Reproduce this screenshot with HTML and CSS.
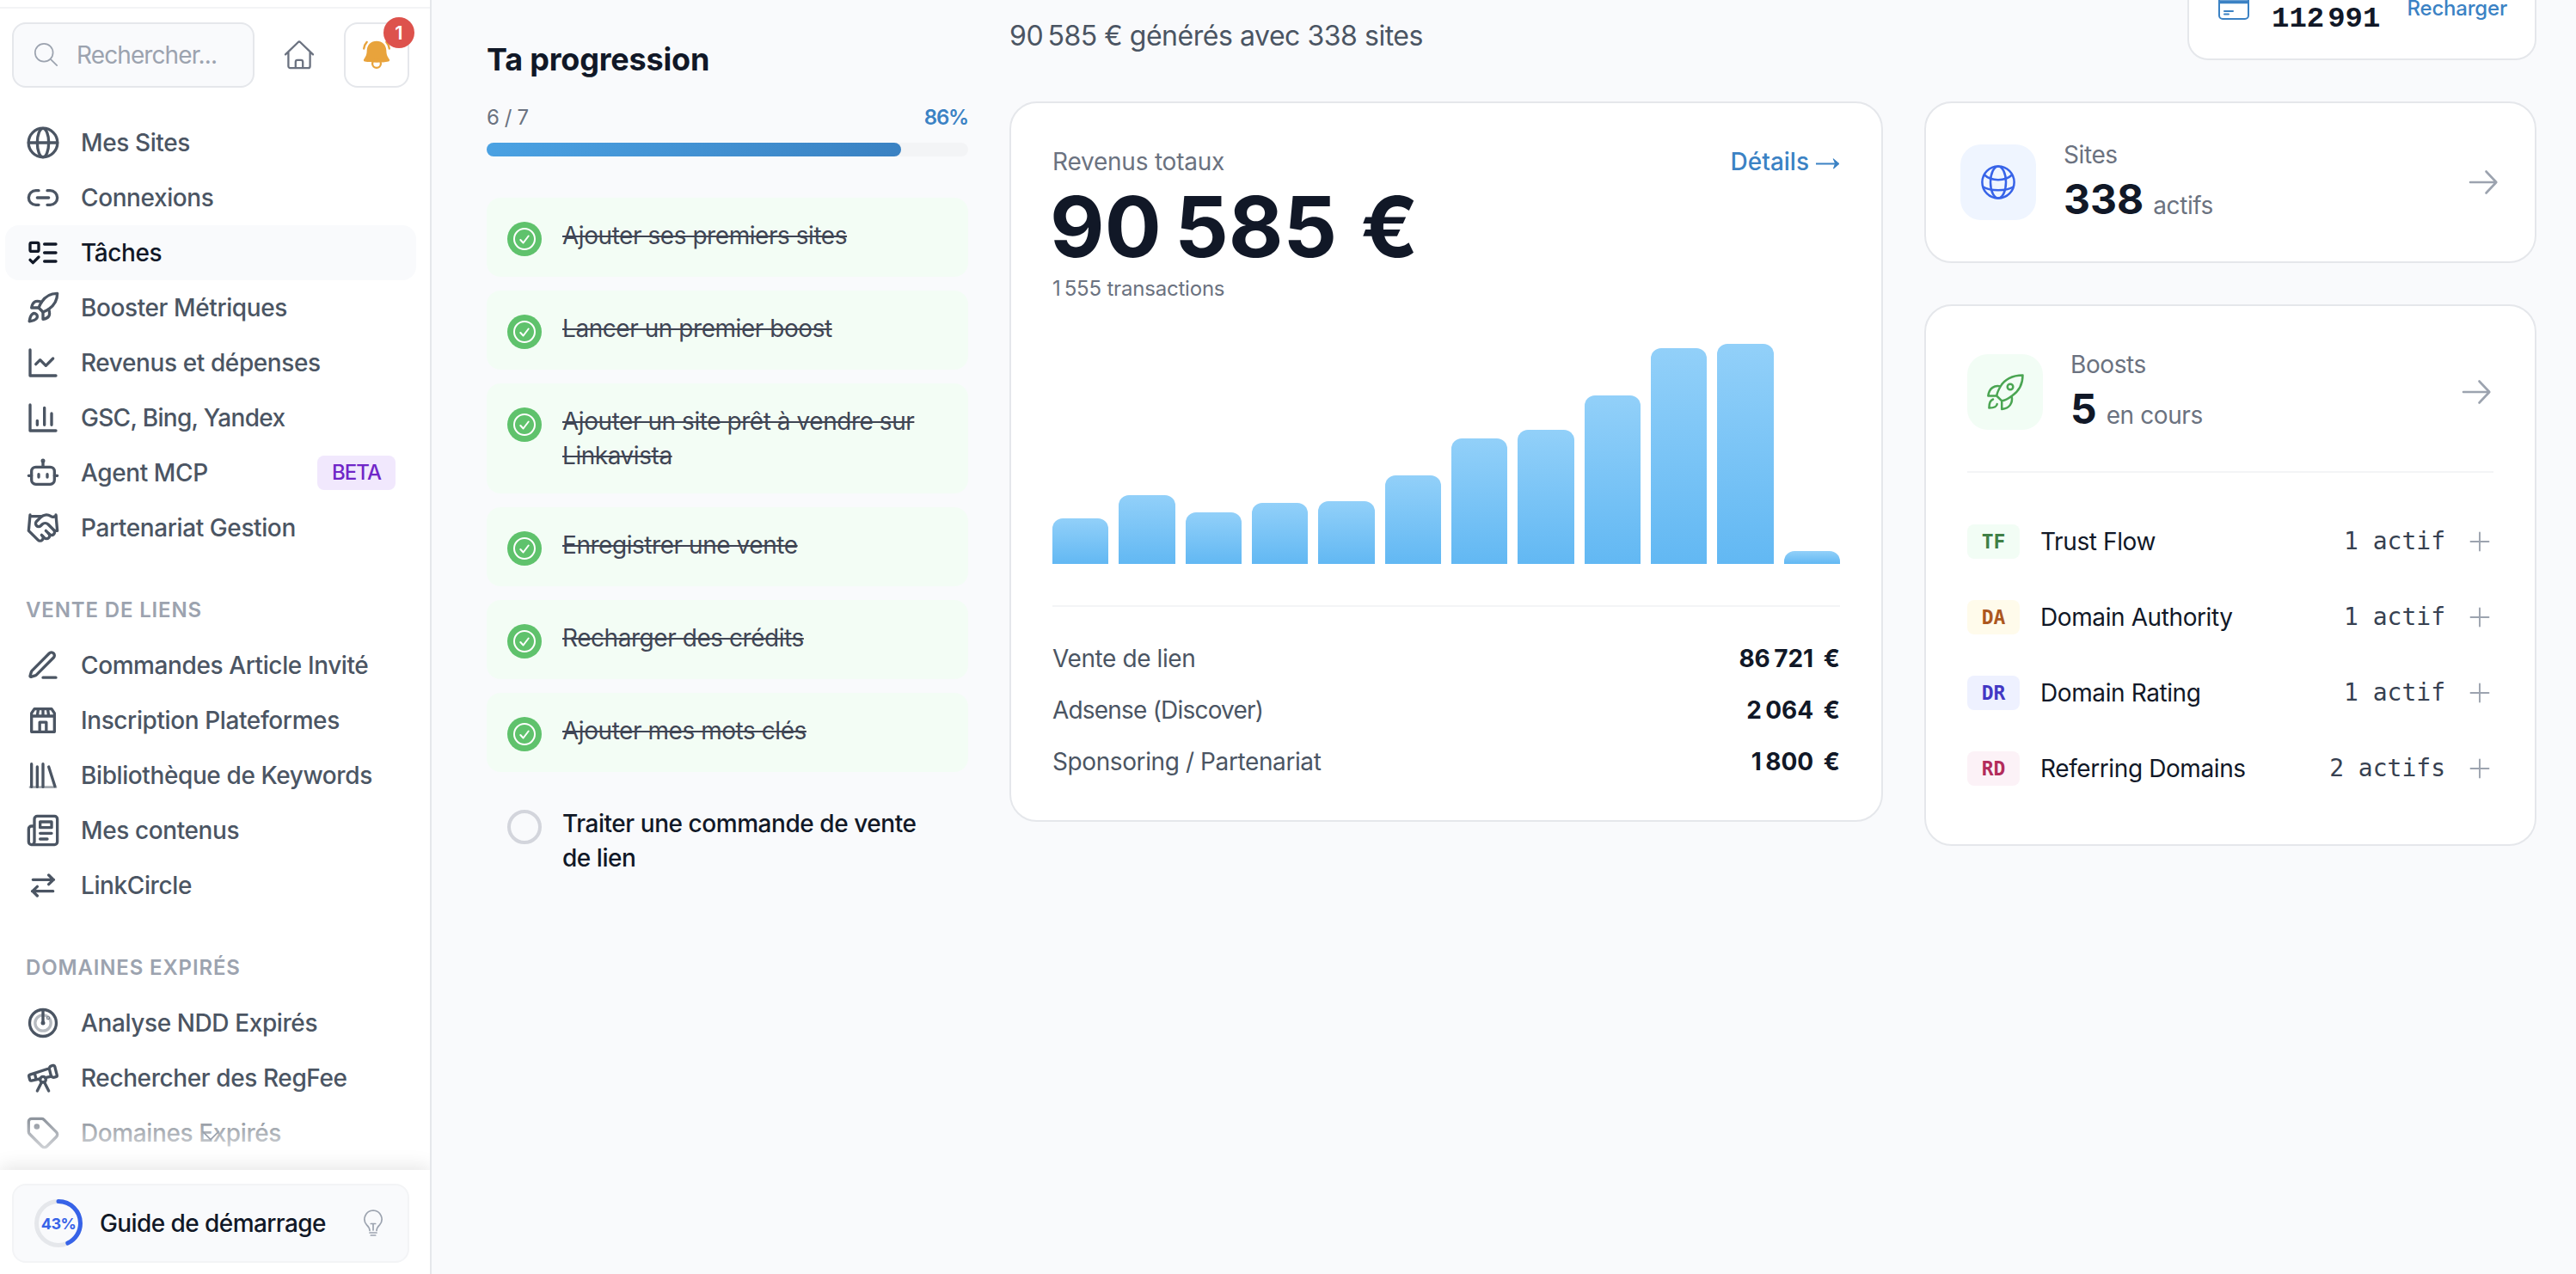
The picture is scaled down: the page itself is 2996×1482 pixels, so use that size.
FILE: index.html
```
<!DOCTYPE html>
<html lang="fr">
<head>
<meta charset="utf-8">
<title>Tâches</title>
<link rel="stylesheet" href="styles.css">
</head>
<body>
<div class="app">
  <aside class="sidebar">
    <header class="side-head">
      <div class="search">
        <svg class="search-icon" viewBox="0 0 32 32"><circle cx="13.2" cy="13.2" r="10.4"/><path d="M20.8 20.8l7.4 7.4"/></svg>
        <span>Rechercher...</span>
      </div>
      <a class="home"><svg viewBox="0 0 40 40"><path d="M4 19.4 18.6 5.2a2 2 0 0 1 2.8 0L36 19.4M7.4 17v16a2.2 2.2 0 0 0 2.2 2.2h20.8a2.2 2.2 0 0 0 2.2-2.2V17M15.8 35v-7a2.2 2.2 0 0 1 2.2-2.2h4a2.2 2.2 0 0 1 2.2 2.2v7"/></svg></a>
      <a class="bell">
        <svg viewBox="0 0 40 40"><path class="fill" d="M20 3.8c-6.6 0-11 4.4-11.300 10.800-.2 4.400-.5 6.200-3.500 10.400-.7 1.200-.2 2.200 1 2.500 3.600.8 8.500 1.200 13.800 1.200s10.200-.4 13.800-1.200c1.200-.3 1.700-1.300 1-2.500-3-4.200-3.300-6-3.500-10.400C31 8.200 26.600 3.800 20 3.800Z"/><circle cx="20" cy="30" r="4.900"/><path d="M5.200 12.500c.4-3 1.600-5.600 3.500-7.600M34.800 12.500c-.4-3-1.600-5.600-3.500-7.600"/></svg>
        <span class="count">1</span>
      </a>
    </header>
    <nav class="nav">
      <a class="item"><svg viewBox="0 0 24 24"><circle cx="12" cy="12" r="10.100"/><ellipse cx="12" cy="12" rx="4" ry="10"/><path d="M2 12h20"/></svg><span>Mes Sites</span></a>
      <a class="item"><svg viewBox="0 0 24 24"><path d="M9 17H7A5 5 0 0 1 7 7h2M15 7h2a5 5 0 1 1 0 10h-2M8 12h8"/></svg><span>Connexions</span></a>
      <a class="item active"><svg viewBox="0 0 24 24"><rect x="3" y="5" width="6" height="6" rx="1"/><path d="m3 17 2 2 4-4M13 6h8M13 12h8M13 18h8"/></svg><span>Tâches</span></a>
      <a class="item"><svg viewBox="0 0 24 24"><path d="M4.500 16.500c-1.500 1.260-2 5-2 5s3.740-.5 5-2c.71-.84.7-2.130-.09-2.910a2.180 2.180 0 0 0-2.910-.09zM12 15l-3-3a22 22 0 0 1 2-3.950A12.880 12.880 0 0 1 22 2c0 2.720-.78 7.500-6 11a22.350 22.350 0 0 1-4 2z"/><path d="M9 12H4s.55-3.030 2-4c1.620-1.080 5 0 5 0M12 15v5s3.030-.55 4-2c1.080-1.620 0-5 0-5"/></svg><span>Booster Métriques</span></a>
      <a class="item"><svg viewBox="0 0 24 24"><path d="M3 3v18h18M19 9l-5 5-4-4-3 3"/></svg><span>Revenus et dépenses</span></a>
      <a class="item"><svg viewBox="0 0 24 24"><path d="M3 3v18h18M18 17V9M13 17V5M8 17v-3"/></svg><span class="snug">GSC, Bing, Yandex</span></a>
      <a class="item"><svg viewBox="0 0 24 24"><rect x="4" y="8" width="16" height="12" rx="3"/><path d="M12 8V4M2 14h2M20 14h2M15 13v2M9 13v2"/><circle cx="12" cy="3.600" r=".5"/></svg><span>Agent MCP</span><b class="beta">BETA</b></a>
      <a class="item"><svg viewBox="0 0 24 24"><path d="m11 17 2 2a1 1 0 1 0 3-3"/><path d="m14 14 2.500 2.500a1 1 0 1 0 3-3l-3.880-3.880a3 3 0 0 0-4.240 0l-.88.88a1 1 0 1 1-3-3l2.810-2.810a5.790 5.790 0 0 1 7.060-.87l.47.28a2 2 0 0 0 1.420.25L21 4"/><path d="m21 3 1 11h-2M3 3 2 14l6.500 6.500a1 1 0 1 0 3-3M3 4h8"/></svg><span>Partenariat Gestion</span></a>
      <h3 class="group">VENTE DE LIENS</h3>
      <a class="item"><svg viewBox="0 0 24 24"><path d="M12 20.500h9M16.376 3.622a1 1 0 0 1 3.002 3.002L7.368 18.635a2 2 0 0 1-.855.506l-2.872.838a.5.5 0 0 1-.62-.62l.838-2.872a2 2 0 0 1 .506-.854z"/></svg><span>Commandes Article Invité</span></a>
      <a class="item"><svg viewBox="0 0 24 24"><path d="M6 4h12l2 3v2H4V7zM4 9v11h16V9M8.700 4 8 9M12 4v5M15.300 4l.7 5M9.700 20v-6.700h4.600V20"/></svg><span>Inscription Plateformes</span></a>
      <a class="item"><svg viewBox="0 0 24 24"><path class="thin" d="M3 20.200h18"/><path d="M4 4v16M8 6v14M12 4v16M16 6l4.300 13.500"/></svg><span>Bibliothèque de Keywords</span></a>
      <a class="item"><svg viewBox="0 0 24 24"><path d="M4 22h16a2 2 0 0 0 2-2V4a2 2 0 0 0-2-2H8a2 2 0 0 0-2 2v16a2 2 0 0 1-2 2Zm0 0a2 2 0 0 1-2-2v-9c0-1.100.9-2 2-2h2M18 14h-8M15 18h-5M10 6h8v4h-8z"/></svg><span>Mes contenus</span></a>
      <a class="item"><svg viewBox="0 0 24 24"><path d="M5 8h14.500M16 4.800 19.300 8 16 11.200M19 16H4.500M8 12.800 4.700 16 8 19.200"/></svg><span>LinkCircle</span></a>
      <h3 class="group">DOMAINES EXPIRÉS</h3>
      <a class="item"><svg viewBox="0 0 24 24"><circle cx="12" cy="12" r="9.300"/><circle class="soft" cx="12" cy="12" r="5.500"/><path d="M12 3v9"/><circle cx="12" cy="12" r=".5"/><circle cx="15.500" cy="8.500" r=".2"/></svg><span>Analyse NDD Expirés</span></a>
      <a class="item"><svg viewBox="0 0 24 24"><path d="m10.065 12.493-6.180 1.318a.934.934 0 0 1-1.108-.702l-.537-2.150a1.070 1.070 0 0 1 .691-1.265l13.504-4.440M13.560 11.747l4.332-.924M16 21l-3.105-6.210M16.485 5.940a2 2 0 0 1 1.455-2.425l1.090-.272a1 1 0 0 1 1.212.727l1.515 6.060a1 1 0 0 1-.727 1.213l-1.090.272a2 2 0 0 1-2.425-1.455zM6.158 8.633l1.114 4.456M8 21l3.105-6.210"/><circle cx="12" cy="13" r="2"/></svg><span>Rechercher des RegFee</span></a>
      <a class="item"><svg viewBox="0 0 24 24"><path d="M12.586 2.586A2 2 0 0 0 11.172 2H4a2 2 0 0 0-2 2v7.172a2 2 0 0 0 .586 1.414l8.704 8.704a2.426 2.426 0 0 0 3.420 0l6.580-6.580a2.426 2.426 0 0 0 0-3.420z"/><circle cx="7.700" cy="7.500" r="1"/></svg><span>Domaines Expirés</span></a>
      <div class="fade"><svg viewBox="0 0 24 24"><path d="M2 7l10 10L22 7"/></svg></div>
    </nav>
    <footer class="side-foot">
      <a class="guide">
        <span class="ring">
          <svg viewBox="0 0 56 56"><circle class="track" cx="28" cy="28" r="25.500"/><circle class="value" cx="28" cy="28" r="25.500" pathLength="100" stroke-dasharray="43 100"/></svg>
          <b>43%</b>
        </span>
        <span class="guide-label">Guide de démarrage</span>
        <svg class="bulb" viewBox="0 0 24 32"><path d="M8 24.500c0-3-1.600-4.700-3.500-6.600A10.200 10.200 0 0 1 12 1a10.200 10.200 0 0 1 7.500 16.900c-1.900 1.900-3.500 3.600-3.500 6.600M12 24v-7.500M9.300 16.500h5.400M8 27h8M9.300 30h5.400"/></svg>
      </a>
    </footer>
  </aside>

  <main class="main">
    <section class="progress">
      <h2>Ta progression</h2>
      <div class="progress-meta"><span>6 / 7</span><b>86%</b></div>
      <div class="bar"><div class="bar-fill" style="width:86%"></div></div>
      <ul class="tasks">
        <li class="done"><svg viewBox="0 0 40 40"><circle class="disc" cx="20" cy="20" r="20"/><circle cx="20" cy="20" r="12"/><path d="M15.300 21l3.300 3.500 6.100-8"/></svg><span>Ajouter ses premiers sites</span></li>
        <li class="done"><svg viewBox="0 0 40 40"><circle class="disc" cx="20" cy="20" r="20"/><circle cx="20" cy="20" r="12"/><path d="M15.300 21l3.300 3.500 6.100-8"/></svg><span>Lancer un premier boost</span></li>
        <li class="done"><svg viewBox="0 0 40 40"><circle class="disc" cx="20" cy="20" r="20"/><circle cx="20" cy="20" r="12"/><path d="M15.300 21l3.300 3.500 6.100-8"/></svg><span>Ajouter un site prêt à vendre sur Linkavista</span></li>
        <li class="done"><svg viewBox="0 0 40 40"><circle class="disc" cx="20" cy="20" r="20"/><circle cx="20" cy="20" r="12"/><path d="M15.300 21l3.300 3.500 6.100-8"/></svg><span>Enregistrer une vente</span></li>
        <li class="done"><svg viewBox="0 0 40 40"><circle class="disc" cx="20" cy="20" r="20"/><circle cx="20" cy="20" r="12"/><path d="M15.300 21l3.300 3.500 6.100-8"/></svg><span>Recharger des crédits</span></li>
        <li class="done"><svg viewBox="0 0 40 40"><circle class="disc" cx="20" cy="20" r="20"/><circle cx="20" cy="20" r="12"/><path d="M15.300 21l3.300 3.500 6.100-8"/></svg><span>Ajouter mes mots clés</span></li>
        <li class="todo"><i class="empty"></i><span>Traiter une commande de vente de lien</span></li>
      </ul>
    </section>

    <section class="board">
      <div class="board-head">
        <p>90&#8239;585 € générés avec 338 sites</p>
        <div class="credit">
          <svg viewBox="0 0 36 32"><rect x="1" y="1" width="34" height="30" rx="4"/><path class="band" d="M1 11.300h34"/><path d="M7 22h10M7 25.600h5"/></svg>
          <strong>112<span class="sep">&#8239;</span>991</strong>
          <a>Recharger</a>
        </div>
      </div>
      <div class="columns">
        <article class="card revenue">
          <div class="row label"><span>Revenus totaux</span><a>Détails<svg viewBox="0 0 28 14"><path d="M.5 7.500h22"/><path class="head" d="M20.500 2l6.500 5.500-6.500 5.500 2-5.500z"/></svg></a></div>
          <div class="total">90&#8239;585 €</div>
          <div class="count-line">1&#8239;555 transactions</div>
          <div class="chart">
            <i style="height:53px"></i><i style="height:80px"></i><i style="height:60px"></i><i style="height:71px"></i><i style="height:73px"></i><i style="height:103px"></i><i style="height:146px"></i><i style="height:156px"></i><i style="height:196px"></i><i style="height:251px"></i><i style="height:256px"></i><i style="height:15px"></i>
          </div>
          <div class="split">
            <div class="row"><span>Vente de lien</span><b>86&#8239;721 €</b></div>
            <div class="row"><span class="tight">Adsense (Discover)</span><b>2&#8239;064 €</b></div>
            <div class="row"><span>Sponsoring / Partenariat</span><b>1&#8239;800 €</b></div>
          </div>
        </article>
        <div class="stack">
          <article class="card sites">
            <div class="stat">
              <span class="tile blue"><svg viewBox="0 0 88 88"><circle cx="44" cy="44" r="18.600"/><ellipse cx="44" cy="44" rx="9" ry="18.600"/><path d="M28 35.500c8 7.500 24 7.500 32 0M26.500 49.500c9 5 26 5 35 0"/></svg></span>
              <div class="stat-text"><span>Sites</span><div><strong>338</strong><em>actifs</em></div></div>
              <svg class="arrow" viewBox="0 0 40 40"><path d="M5 20h30M23.500 7.500 35.300 20 23.500 32.500"/></svg>
            </div>
          </article>
          <article class="card boosts">
            <div class="stat">
              <span class="tile green"><svg viewBox="0 0 88 88"><path d="M64.500 24.500C52 24.500 43 30 39 37c-3 5-4.500 9-4.800 11.500l6 5.800C43 54 48 51.500 52 48.500c8-5.500 12.500-13.500 12.500-24ZM38.500 37.500c-6.500-1.500-13 1.500-14.200 11h10M40.200 54.500V64c9-1 13-7 11.500-15M30 52.500c-3 1-4.600 4-4.600 10 6 0 9-1.500 9.300-4.500"/><circle cx="50" cy="38" r="3.300"/></svg></span>
              <div class="stat-text"><span>Boosts</span><div><strong>5</strong><em>en cours</em></div></div>
              <svg class="arrow" viewBox="0 0 40 40"><path d="M5 20h30M23.500 7.500 35.300 20 23.500 32.500"/></svg>
            </div>
            <ul class="metrics">
              <li><b class="tag tf">TF</b><span>Trust Flow</span><code>1 actif</code><svg viewBox="0 0 32 32"><path d="M5.500 16h21M16 5.500v21"/></svg></li>
              <li><b class="tag da">DA</b><span>Domain Authority</span><code>1 actif</code><svg viewBox="0 0 32 32"><path d="M5.500 16h21M16 5.500v21"/></svg></li>
              <li><b class="tag dr">DR</b><span>Domain Rating</span><code>1 actif</code><svg viewBox="0 0 32 32"><path d="M5.500 16h21M16 5.500v21"/></svg></li>
              <li><b class="tag rd">RD</b><span>Referring Domains</span><code>2 actifs</code><svg viewBox="0 0 32 32"><path d="M5.500 16h21M16 5.500v21"/></svg></li>
            </ul>
          </article>
        </div>
      </div>
    </section>
  </main>
</div>
</body>
</html>
```
FILE: styles.css
```
*{box-sizing:border-box;margin:0;padding:0}
body{font-family:Inter,"Liberation Sans",sans-serif;font-size:28px;line-height:40px;letter-spacing:-.4px;color:#111827;background:#f9fafc}
svg{display:block;flex:none;fill:none;stroke:currentColor;stroke-linecap:round;stroke-linejoin:round}
ul{list-style:none}
i,em{font-style:normal}
.app{display:flex;height:1482px;overflow:hidden}

/* Sidebar */
.sidebar{display:flex;flex-direction:column;flex:none;width:502px;padding-top:8px;background:#fff;border-right:2px solid #e5e7eb;overflow:hidden}
.side-head{display:flex;gap:14px;height:126px;padding:16px 24px 0 14px;border-top:2px solid #f3f4f6}
.search{display:flex;align-items:center;gap:19px;width:282px;height:76px;padding-left:22px;border:2px solid #e5e7eb;border-radius:16px;background:#f9fafc;color:#9ca3af;letter-spacing:-.9px}
.search-icon{width:32px;height:32px;stroke-width:1.700}
.home,.bell{display:flex;align-items:center;justify-content:center;width:76px;height:76px;color:#6b7280}
.home svg,.bell svg{width:40px;height:40px;stroke-width:2.300}
.bell{position:relative;border:2px solid #e5e7eb;border-radius:16px;color:#e8a33c}
.bell .fill{fill:currentColor;stroke:none}
.count{position:absolute;top:-8px;right:-8px;width:36px;height:36px;border-radius:50%;background:#dd524c;color:#fff;font-size:22px;font-weight:600;line-height:36px;text-align:center;letter-spacing:0}
.nav{position:relative;flex:1;min-height:0;overflow:hidden}
.item{display:flex;align-items:center;gap:24px;height:64px;margin:0 16px 0 6px;padding:0 24px;border-radius:16px;font-weight:500;color:#4b5563}
.item svg{width:40px;height:40px;stroke-width:2}
.item .soft{opacity:.4}
.item .thin{stroke-width:1.600;opacity:.5}
.item .snug{letter-spacing:-.7px}
.item.active{background:#f9fafc;color:#111827}
.beta{margin-left:auto;width:91px;height:40px;border-radius:8px;background:#f1e8fd;color:#7026c8;font-size:24px;font-weight:500;line-height:40px;text-align:center;letter-spacing:-.9px}
.group{height:96px;padding:44px 30px 0;font-size:24px;font-weight:600;color:#9ca3af;letter-spacing:.85px}
.fade{position:absolute;left:0;right:0;bottom:0;height:96px;background:linear-gradient(rgba(255,255,255,0),#fff)}
.fade svg{width:22px;height:22px;margin:45px auto 0 234px;stroke-width:2;color:#9ca3af}
.side-foot{position:relative;height:121px;padding:16px 24px 0 14px;background:#fff;box-shadow:0 -4px 20px rgba(0,0,0,.1)}
.guide{display:flex;align-items:center;height:92px;padding:0 28px 0 24px;border:2px solid #f3f4f6;border-radius:16px;background:#f9fafc}
.ring{display:grid;flex:none;width:56px;height:56px}
.ring svg,.ring b{grid-area:1/1}
.ring svg{transform:rotate(-90deg);stroke-width:5}
.ring .track{stroke:#e5e7eb}
.ring .value{stroke:#3763e8}
.ring b{font-size:18px;line-height:58px;text-align:center;color:#3763e8;letter-spacing:-.6px}
.guide-label{flex:1;padding-left:20px;font-weight:500;letter-spacing:-.58px}
.bulb{width:24px;height:32px;stroke-width:1.700;color:#9ca3af}

/* Main */
.main{display:flex;flex:1;gap:48px;padding:0 46px 0 64px}
.progress{width:560px;padding-top:45px}
.progress h2{font-size:36px;line-height:48px;font-weight:700;letter-spacing:-.2px}
.progress-meta{display:flex;justify-content:space-between;margin-top:28px;font-size:24px;line-height:32px;color:#6b7280}
.progress-meta b{font-weight:600;color:#3b82c4;letter-spacing:-1.200px}
.bar{height:16px;margin-top:13px;border-radius:8px;background:#f3f4f6}
.bar-fill{height:16px;border-radius:8px;background:linear-gradient(135deg,#4ba2e3,#3a81c2)}
.tasks{display:flex;flex-direction:column;gap:16px;margin-top:48px}
.tasks li{display:flex;gap:24px;padding:24px;border-radius:16px}
.tasks svg,.empty{flex:none;width:40px;height:40px;margin-top:4px}
.tasks svg{stroke:#fff;stroke-width:2}
.disc{fill:#5fc26c;stroke:none}
.done{background:#f3fdf5;color:#3f4554}
.done span{text-decoration:line-through;text-decoration-thickness:2px;letter-spacing:-.45px}
.todo{font-weight:500}
.todo span{letter-spacing:-.45px}
.empty{border:4px solid #d3d5dc;border-radius:50%}

.board{flex:1}
.board-head{display:flex;justify-content:space-between;height:118px}
.board-head p{padding-top:18px;font-size:32px;line-height:48px;color:#4b5563;letter-spacing:-.46px}
.credit{display:flex;align-items:center;width:406px;height:126px;margin-top:-56px;padding:0 32px 0 34px;border:2px solid #e5e7eb;border-radius:24px;background:#fff}
.credit svg{width:36px;height:32px;stroke-width:2;color:#3b82c4}
.credit .band{stroke-width:4;stroke-linecap:butt}
.credit strong{padding:35px 0 0 26px;font-family:"Liberation Mono",monospace;font-size:34px;letter-spacing:0}
.credit .sep{font-size:13px}
.credit a{margin-left:auto;padding-top:5px;font-size:24px;line-height:24px;font-weight:500;letter-spacing:-.2px;color:#3b82c4}
.columns{display:flex;align-items:flex-start;gap:48px}
.card{border:2px solid #e5e7eb;border-radius:32px;background:#fff}
.row{display:flex;justify-content:space-between}
.revenue{width:1016px;padding:48px 48px 38px}
.label span{color:#6b7280;letter-spacing:-.22px}
.label a{display:flex;align-items:center;gap:8px;font-weight:500;color:#3b82c4;letter-spacing:0}
.label svg{width:28px;height:14px;margin-top:4px;stroke-width:2}
.label .head{fill:currentColor;stroke-width:1}
.total{margin:8px 0 0 -3px;font-size:98px;line-height:96px;font-weight:700;letter-spacing:0;word-spacing:4px}
.count-line{margin-top:8px;font-size:24px;line-height:32px;color:#6b7280;letter-spacing:-.2px}
.chart{display:flex;align-items:flex-end;gap:12px;height:304px;padding-top:48px}
.chart i{flex:1;border-radius:12px 12px 0 0;background:linear-gradient(#92d0f9,#62b8f3)}
.split{margin-top:48px;padding-top:30px;border-top:2px solid #f3f4f6}
.split .row{line-height:60px;color:#4b5563}
.split .tight{letter-spacing:-.8px}
.split b{font-weight:700;color:#111827;letter-spacing:0;word-spacing:5px}
.stack{display:flex;flex-direction:column;flex:1;gap:48px}
.sites{padding:40px}
.boosts{padding:48px 48px 44px}
.stat{display:flex;align-items:center;height:104px}
.tile{width:88px;height:88px;border-radius:24px}
.tile svg{width:88px;height:88px;stroke-width:2.500}
.blue{background:#eff5ff;color:#3763e8}
.green{background:#f2fdf5;color:#4aa552}
.stat-text{flex:1;padding-left:32px;color:#6b7280}
.stat-text div{display:flex;align-items:baseline;gap:11px;height:64px;line-height:64px}
.stat-text strong{font-size:48px;color:#111827;letter-spacing:0}
.arrow{width:40px;height:40px;stroke-width:2.600;color:#9ca3af}
.metrics{margin-top:40px;padding-top:36px;border-top:2px solid #f3f4f6}
.metrics li{display:flex;align-items:center;height:88px}
.tag{width:61px;height:40px;margin-right:24px;border-radius:8px;font-family:"DejaVu Sans Mono",monospace;font-size:23px;line-height:40px;text-align:center;letter-spacing:0}
.tf{background:#f2fdf5;color:#3f7f46}
.da{background:#fffbeb;color:#ac5720}
.dr{background:#eef1ff;color:#4238c4}
.rd{background:#fcf2f7;color:#b32c5c}
.metrics span{flex:1}
.metrics code{margin-right:24px;font-family:"DejaVu Sans Mono",monospace;font-size:28px;letter-spacing:0;color:#374151}
.metrics svg{width:32px;height:32px;stroke-width:1.900;color:#9ca3af}
```
